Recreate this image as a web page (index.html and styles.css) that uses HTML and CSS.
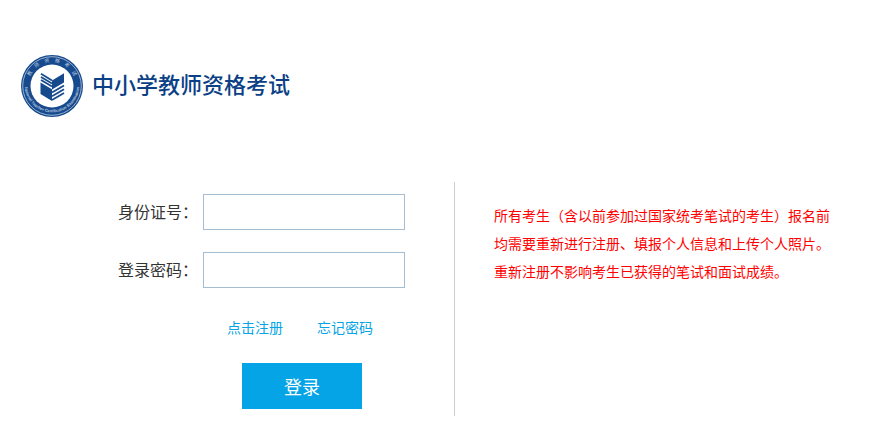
FILE: index.html
```html
<!DOCTYPE html>
<html lang="zh-CN">
  <head>
    <meta charset="utf-8" />
    <title>中小学教师资格考试</title>
    <link rel="stylesheet" href="styles.css" />
  </head>
  <body>
    <header class="header">
      <svg class="logo" viewBox="0 0 62 62" aria-hidden="true">
        <defs>
          <path id="arcTop" d="M7 31a24 24 0 0 1 48 0" />
          <path id="arcBottom" d="M4 26a27.3 27.3 0 1 0 54 0" />
        </defs>
        <circle cx="31" cy="31" r="31" fill="#174a8c" />
        <circle cx="31" cy="31" r="29.3" fill="none" stroke="#b9cbe2" stroke-width="0.8" />
        <circle cx="31" cy="31" r="21.5" fill="#fff" />
        <text class="logo-cn">
          <textPath href="#arcTop" startOffset="50%" text-anchor="middle">教&#8195;师&#8195;资&#8195;格&#8195;考&#8195;试</textPath>
        </text>
        <text class="logo-en">
          <textPath href="#arcBottom" startOffset="50%" text-anchor="middle">National Teacher Certification Examination</textPath>
        </text>
        <g fill="#174a8c">
          <path d="M19.5 27.5L31 34.2v11.8l-11.5-7z" />
          <path d="M43 18.3v9.2L31 34.6v-9.2z" />
        </g>
        <g fill="none" stroke="#174a8c" stroke-width="1.8">
          <path d="M20 18.8l11 6.6" />
          <path d="M20 21.9l11 6.6" />
          <path d="M20 25l11 6.6" />
          <path d="M43 30.5l-12 7.1" />
          <path d="M43 34.2l-12 7.1" />
          <path d="M43 37.9l-12 7.1" />
        </g>
      </svg>
      <h1 class="title">中小学教师资格考试</h1>
    </header>
    <main class="main">
      <form class="login" action="/" method="post">
        <div class="field">
          <label for="idcard">身份证号：</label>
          <input type="text" id="idcard" name="idcard" />
        </div>
        <div class="field">
          <label for="password">登录密码：</label>
          <input type="password" id="password" name="password" />
        </div>
        <div class="links">
          <a href="#">点击注册</a>
          <a href="#">忘记密码</a>
        </div>
        <button type="submit" class="submit">登录</button>
      </form>
      <div class="notice">
        <p>
          所有考生（含以前参加过国家统考笔试的考生）报名前均需要重新进行注册、填报个人信息和上传个人照片。重新注册不影响考生已获得的笔试和面试成绩。
        </p>
      </div>
    </main>
  </body>
</html>
```

FILE: styles.css
```css
body {
  margin: 0;
  background-color: #fff;
  color: #333;
  font-family: "Noto Sans CJK SC", sans-serif;
  font-size: 16px;
}
.header {
  display: flex;
  align-items: center;
  gap: 9px;
  padding: 55px 21px 0;
}
.logo {
  width: 62px;
  height: 62px;
}
.logo-cn {
  fill: #b9cbe2;
  font-size: 5px;
}
.logo-en {
  fill: #b9cbe2;
  font-family: "Liberation Sans", sans-serif;
  font-size: 4px;
  font-weight: bold;
}
.title {
  margin: 0;
  padding-bottom: 6px;
  color: #0b3f86;
  font-size: 22px;
  font-weight: 500;
  line-height: 32px;
}
.main {
  display: flex;
  margin-top: 65px;
}
.login {
  box-sizing: border-box;
  flex: 0 0 455px;
  padding: 12px 49px 7px 118px;
  border-right: 1px solid #ccc;
}
.field {
  display: flex;
  align-items: center;
  justify-content: space-between;
  margin-bottom: 22px;
}
.field label {
  padding-bottom: 2px;
}
.field input {
  box-sizing: border-box;
  width: 202px;
  height: 36px;
  padding: 0 8px;
  border: 1px solid #a5bdd3;
  font-size: 16px;
}
.links {
  display: flex;
  gap: 34px;
  margin: 29px 0 26px 109px;
  font-size: 14px;
  line-height: 20px;
}
.links a {
  color: #05a4e6;
  text-decoration: none;
}
.submit {
  display: block;
  width: 120px;
  height: 46px;
  margin-left: 124px;
  padding: 0;
  border: 0;
  background-color: #05a4e6;
  color: #fff;
  font-family: inherit;
  font-size: 18px;
}
.notice {
  flex: 1;
  padding: 19px 39px;
  color: #f00;
  font-size: 14px;
  line-height: 28px;
}
.notice p {
  max-width: 344px;
  margin: 0;
}
```
